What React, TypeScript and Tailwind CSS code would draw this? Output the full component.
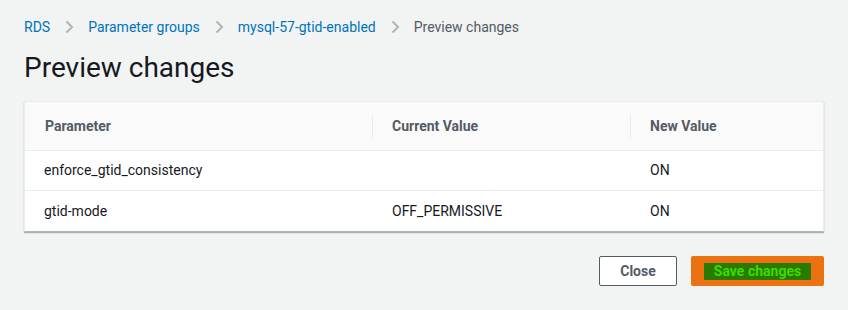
import React from "react";

function Chevron() {
  return (
    <svg width="16" height="16" viewBox="0 0 16 16" className="mx-[11px]" aria-hidden="true">
      <path d="M5.5 2.5 L11 8 L5.5 13.5" fill="none" stroke="#aab7b8" strokeWidth="2" />
    </svg>
  );
}

export default function App() {
  const rows = [
    { p: "enforce_gtid_consistency", c: "", n: "ON" },
    { p: "gtid-mode", c: "OFF_PERMISSIVE", n: "ON" },
  ];
  return (
    <div
      className="w-[848px] h-[310px] bg-[#f2f3f3] px-6 pt-[17px] text-[#16191f]"
      style={{ fontFamily: "Roboto, 'Noto Sans', sans-serif" }}
    >
      <nav className="flex items-center h-[20px] text-[14px] leading-[20px]">
        <span className="text-[#0073bb]">RDS</span>
        <Chevron />
        <span className="text-[#0073bb]">Parameter groups</span>
        <Chevron />
        <span className="text-[#0073bb]">mysql-57-gtid-enabled</span>
        <Chevron />
        <span className="text-[#545b64]">Preview changes</span>
      </nav>
      <h1 className="mt-[13px] text-[28px] leading-[36px] font-normal text-[#16191f]">Preview changes</h1>
      <div className="mt-[15px] bg-white border border-[#eaeded] border-b-[#aab7b8] shadow-[0_1px_1px_rgba(0,28,36,0.3)] text-[14px]">
        <div className="grid grid-cols-[347px_258px_1fr] h-[49px] bg-[#fafafa] border-b border-[#eaeded] items-center font-bold text-[#545b64]">
          <div className="pl-[20px]">Parameter</div>
          <div className="pl-[19px] border-l border-[#eaeded] h-[24px] flex items-center">Current Value</div>
          <div className="pl-[19px] border-l border-[#eaeded] h-[24px] flex items-center">New Value</div>
        </div>
        {rows.map((r, i) => (
          <div
            key={r.p}
            className={`grid grid-cols-[347px_258px_1fr] h-[40px] items-center ${i === 0 ? "border-b border-[#eaeded]" : ""}`}
          >
            <div className="pl-[19px]">{r.p}</div>
            <div className="pl-[20px]">{r.c}</div>
            <div className="pl-[20px]">{r.n}</div>
          </div>
        ))}
      </div>
      <div className="flex justify-end gap-[14px] mt-[24px]">
        <button className="h-[30px] w-[78px] border border-[#545b64] rounded-[2px] bg-white text-[#545b64] font-bold text-[14px]">
          Close
        </button>
        <button className="h-[30px] w-[133px] rounded-[2px] bg-[#ec7211] flex items-center justify-center font-bold text-[14px]">
          <span className="bg-[#2a7a00] text-[#3bdb00] px-[10px] leading-[17px]">Save changes</span>
        </button>
      </div>
    </div>
  );
}
